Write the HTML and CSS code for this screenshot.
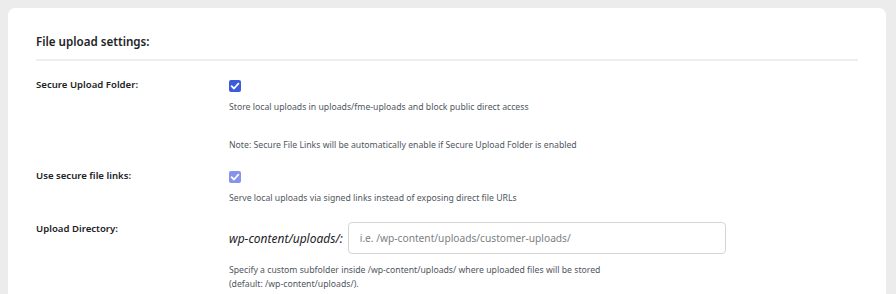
FILE: index.html
```html
<!DOCTYPE html>
<html>
<head>
<meta charset="utf-8">
<link rel="stylesheet" href="styles.css">
</head>
<body>
<div class="card">
  <h2 class="title">File upload settings:</h2>
  <div class="rows">
    <div class="row row-1">
      <div class="label">Secure Upload Folder:</div>
      <div class="field">
        <span class="check"><svg viewBox="0 0 12 12" width="12" height="12"><path d="M2.6 6.2 L5 8.5 L9.4 3.6" fill="none" stroke="#fff" stroke-width="1.8" stroke-linecap="round" stroke-linejoin="round"/></svg></span>
        <p class="desc first">Store local uploads in uploads/fme-uploads and block public direct access</p>
        <p class="desc note">Note: Secure File Links will be automatically enable if Secure Upload Folder is enabled</p>
      </div>
    </div>
    <div class="row row-2">
      <div class="label">Use secure file links:</div>
      <div class="field">
        <span class="check disabled"><svg viewBox="0 0 12 12" width="12" height="12"><path d="M2.6 6.2 L5 8.5 L9.4 3.6" fill="none" stroke="#fff" stroke-width="1.8" stroke-linecap="round" stroke-linejoin="round"/></svg></span>
        <p class="desc first">Serve local uploads via signed links instead of exposing direct file URLs</p>
      </div>
    </div>
    <div class="row row-3">
      <div class="label">Upload Directory:</div>
      <div class="field">
        <div class="dir">
          <span class="prefix">wp-content/uploads/:</span>
          <input class="input" type="text" placeholder="i.e. /wp-content/uploads/customer-uploads/">
        </div>
        <p class="desc help">Specify a custom subfolder inside /wp-content/uploads/ where uploaded files will be stored<br>(default: /wp-content/uploads/).</p>
      </div>
    </div>
  </div>
</div>
</body>
</html>
```
FILE: styles.css
```css
html, body {
  margin: 0;
  padding: 0;
}
body {
  background: #ececec;
  font-family: "Noto Sans", "Open Sans", sans-serif;
  color: #1d2327;
  padding: 8px 10px 0 8px;
  height: 294px;
  box-sizing: border-box;
  overflow: hidden;
}
.card {
  background: #fff;
  border-radius: 7px;
  padding: 24px 28px 40px 28px;
  min-height: 320px;
}
.title {
  margin: 0;
  font-size: 11.6px;
  font-weight: 600;
  line-height: 20px;
  padding-bottom: 7px;
  border-bottom: 2px solid #eeeeee;
  color: #1d2327;
}
.rows {
  display: flex;
  flex-direction: column;
}
.row {
  display: grid;
  grid-template-columns: 193px 1fr;
}
.label {
  font-size: 9.6px;
  font-weight: 600;
  line-height: 14px;
  color: #1d2327;
}
.row-1 { margin-top: 17px; }
.row-2 { margin-top: 17px; }
.row-3 { margin-top: 17px; }
.field {
  display: flex;
  flex-direction: column;
  align-items: flex-start;
}
.check {
  display: flex;
  align-items: center;
  justify-content: center;
  width: 12px;
  height: 12px;
  border-radius: 2px;
  background: #3b5bdb;
  margin-top: 2px;
}
.check.disabled {
  background: #8593ee;
}
.desc {
  margin: 0;
  font-size: 8.7px;
  line-height: 14px;
  color: #50575e;
}
.desc.first { margin-top: 8px; }
.desc.note { margin-top: 24px; }
.dir {
  display: flex;
  align-items: center;
  margin-top: 0;
}
.prefix {
  font-style: italic;
  font-size: 12px;
  color: #1d2327;
  margin-right: 5px;
}
.input {
  width: 378px;
  height: 32px;
  box-sizing: border-box;
  border: 1px solid #d5d5d5;
  border-radius: 4px;
  padding: 0 11px;
  font-family: "Noto Sans", "Open Sans", sans-serif;
  font-size: 10.2px;
  color: #1d2327;
  background: #fff;
}
.input::placeholder {
  color: #7a7f84;
}
.desc.help {
  margin-top: 9px;
}
```
